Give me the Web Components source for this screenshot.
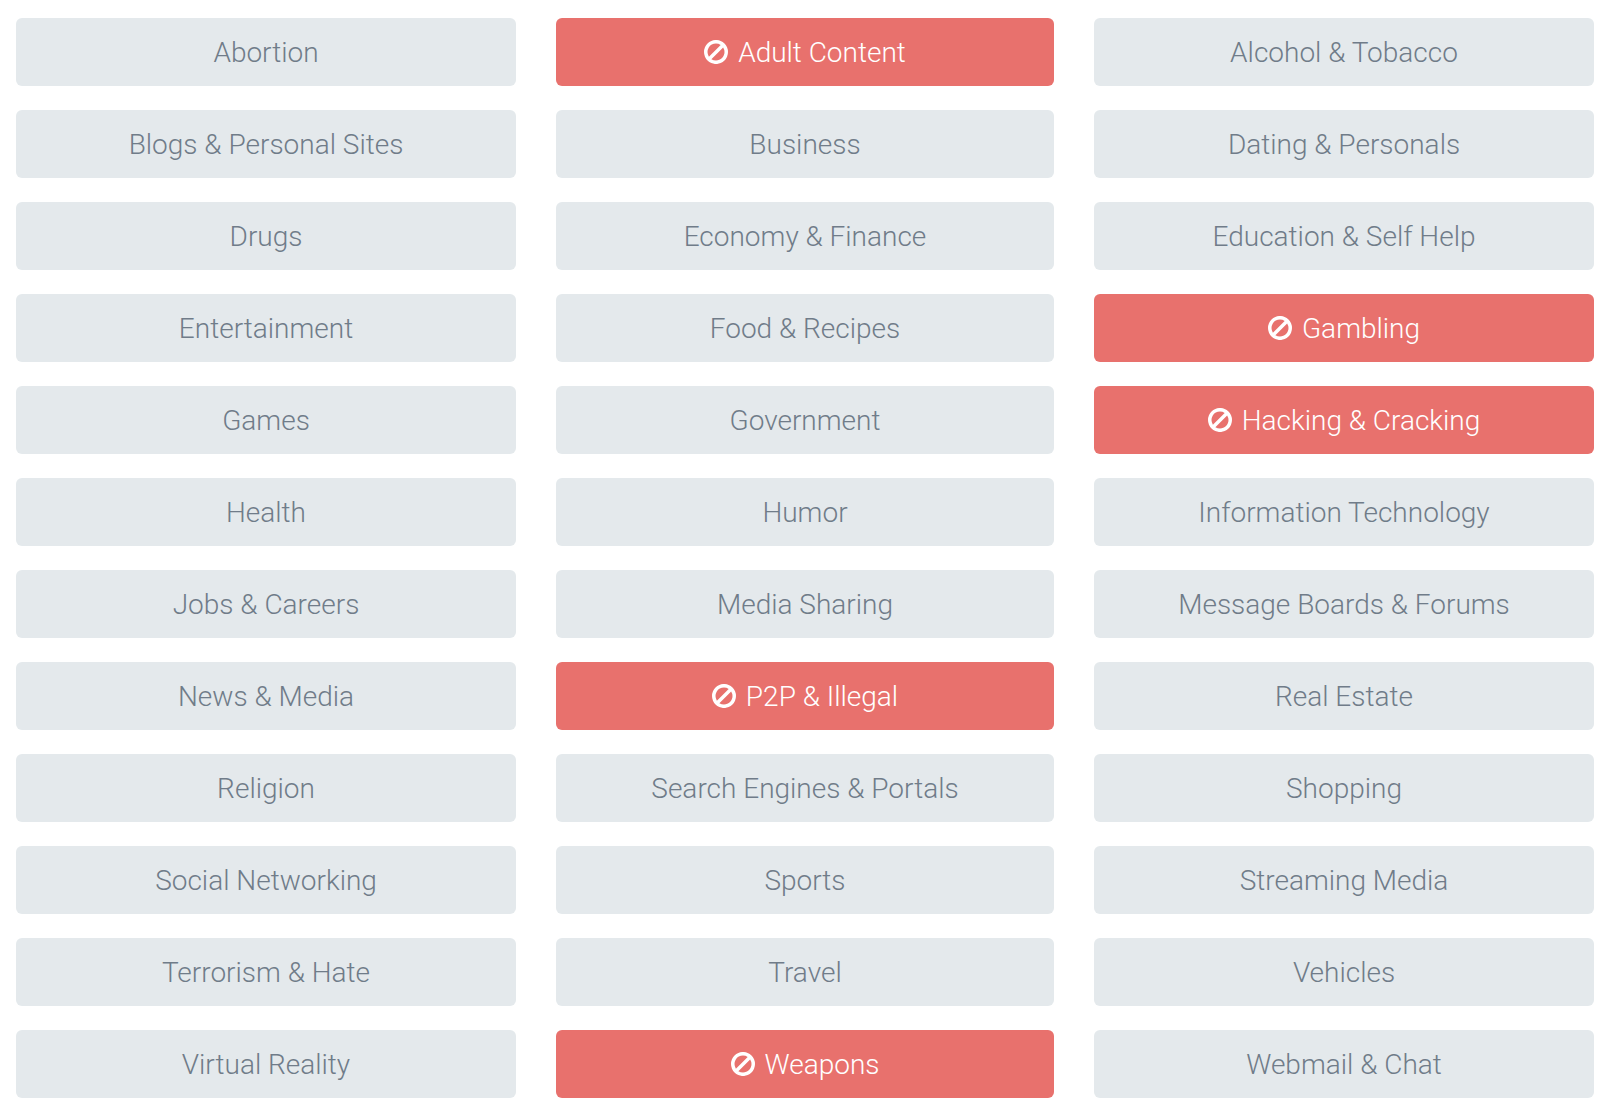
<!DOCTYPE html>
<html lang="en">
<head>
<meta charset="utf-8">
<title>Content categories</title>
<style>
  body { margin: 0; background: #fff; font-family: Roboto, "Liberation Sans", sans-serif; }
</style>
</head>
<body>
<category-grid>
  <category-toggle>Abortion</category-toggle>
  <category-toggle blocked>Adult Content</category-toggle>
  <category-toggle>Alcohol &amp; Tobacco</category-toggle>
  <category-toggle>Blogs &amp; Personal Sites</category-toggle>
  <category-toggle>Business</category-toggle>
  <category-toggle>Dating &amp; Personals</category-toggle>
  <category-toggle>Drugs</category-toggle>
  <category-toggle>Economy &amp; Finance</category-toggle>
  <category-toggle>Education &amp; Self Help</category-toggle>
  <category-toggle>Entertainment</category-toggle>
  <category-toggle>Food &amp; Recipes</category-toggle>
  <category-toggle blocked>Gambling</category-toggle>
  <category-toggle>Games</category-toggle>
  <category-toggle>Government</category-toggle>
  <category-toggle blocked>Hacking &amp; Cracking</category-toggle>
  <category-toggle>Health</category-toggle>
  <category-toggle>Humor</category-toggle>
  <category-toggle>Information Technology</category-toggle>
  <category-toggle>Jobs &amp; Careers</category-toggle>
  <category-toggle>Media Sharing</category-toggle>
  <category-toggle>Message Boards &amp; Forums</category-toggle>
  <category-toggle>News &amp; Media</category-toggle>
  <category-toggle blocked>P2P &amp; Illegal</category-toggle>
  <category-toggle>Real Estate</category-toggle>
  <category-toggle>Religion</category-toggle>
  <category-toggle>Search Engines &amp; Portals</category-toggle>
  <category-toggle>Shopping</category-toggle>
  <category-toggle>Social Networking</category-toggle>
  <category-toggle>Sports</category-toggle>
  <category-toggle>Streaming Media</category-toggle>
  <category-toggle>Terrorism &amp; Hate</category-toggle>
  <category-toggle>Travel</category-toggle>
  <category-toggle>Vehicles</category-toggle>
  <category-toggle>Virtual Reality</category-toggle>
  <category-toggle blocked>Weapons</category-toggle>
  <category-toggle>Webmail &amp; Chat</category-toggle>
</category-grid>

<template id="grid-template">
  <style>
    :host {
      display: grid;
      grid-template-columns: minmax(0, 250fr) minmax(0, 249fr) minmax(0, 250fr);
      gap: 24px 40px;
      padding: 18px 20px 20px 16px;
    }
  </style>
  <slot></slot>
</template>

<template id="toggle-template">
  <style>
    :host { display: block; }
    button {
      display: flex;
      align-items: center;
      justify-content: center;
      gap: 10px;
      box-sizing: border-box;
      width: 100%;
      margin: 0;
      padding: 16px 24px;
      border: 0;
      border-radius: 6px;
      background: #e4e9ec;
      color: #707c89;
      font-family: inherit;
      font-size: 28px;
      font-weight: 300;
      line-height: 34px;
      cursor: pointer;
    }
    span { padding-top: 2px; }
    svg { display: none; flex: none; width: 24px; height: 24px; fill: currentColor; }
    :host([blocked]) button { background: #e8716d; color: #fff; }
    :host([blocked]) svg { display: block; }
  </style>
  <button type="button">
    <svg viewBox="0 125 1536 1536" aria-hidden="true"><path d="M1312 893q0-161-87-295l-754 753q137 89 297 89 111 0 211.500-43.500t173.500-116.500 116-174.500 43-212.500zm-999 299l755-754q-135-91-300-91-148 0-273 73t-198 199-73 274q0 162 89 299zm1223-299q0 157-61 300t-163.500 246-245 164-298.500 61-298.500-61-245-164-163.500-246-61-300 61-299.500 163.500-245.500 245-164 298.500-61 298.500 61 245 164 163.500 245.500 61 299.500z"/></svg>
    <span><slot></slot></span>
  </button>
</template>

<script>
  class CategoryGrid extends HTMLElement {
    constructor() {
      super();
      this.attachShadow({ mode: "open" })
        .append(document.getElementById("grid-template").content.cloneNode(true));
    }
  }

  class CategoryToggle extends HTMLElement {
    static observedAttributes = ["blocked"];

    constructor() {
      super();
      this.attachShadow({ mode: "open" })
        .append(document.getElementById("toggle-template").content.cloneNode(true));
      this.button = this.shadowRoot.querySelector("button");
      this.button.addEventListener("click", () => this.toggleAttribute("blocked"));
    }

    connectedCallback() { this.update(); }
    attributeChangedCallback() { this.update(); }

    update() {
      this.button.setAttribute("aria-pressed", String(this.hasAttribute("blocked")));
    }
  }

  customElements.define("category-grid", CategoryGrid);
  customElements.define("category-toggle", CategoryToggle);
</script>
</body>
</html>
